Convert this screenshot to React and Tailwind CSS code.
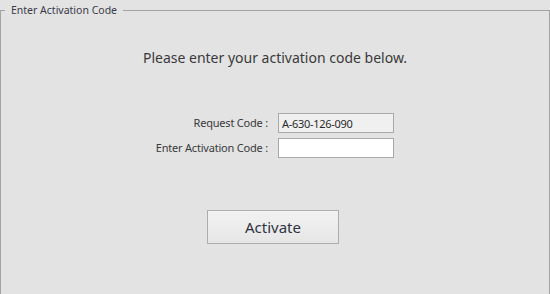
import React from "react";

// Activation code panel
const FieldRow = ({ label, children }) => (
  <div className="flex items-center">
    <label className="w-[277px] pr-[10px] text-right text-[11px] tracking-[-0.2px] leading-[20px] text-[#3a3a3a]">
      {label}
    </label>
    {children}
  </div>
);

const App = () => {
  return (
    <div
      className="w-[550px] h-[294px] overflow-hidden bg-[#e3e3e3]"
      style={{ fontFamily: '"Noto Sans", "Open Sans", sans-serif' }}
    >
      <fieldset className="h-[320px] border border-[#a3a3a3]">
        <legend className="ml-[4px] px-[6px] text-[10.5px] leading-[20px] text-[#3a3a4a]">
          Enter Activation Code
        </legend>

        <div className="flex flex-col items-start">
          <h1 className="mt-[28px] w-full text-center text-[14px] leading-[20px] text-[#3a3a3a]">
            Please enter your activation code below.
          </h1>

          <div className="mt-[45px] flex flex-col gap-[5px]">
            <FieldRow label="Request Code :">
              <input
                readOnly
                value="A-630-126-090"
                className="w-[116px] h-[20px] border border-[#a9a9a9] bg-[#f0f0f0] px-[3px] text-[11px] tracking-[-0.3px] text-[#2a2a2a] outline-none"
              />
            </FieldRow>
            <FieldRow label="Enter Activation Code :">
              <input className="w-[116px] h-[20px] border border-[#a9a9a9] bg-white px-[3px] text-[11px] outline-none" />
            </FieldRow>
          </div>

          <button className="mt-[52px] ml-[206px] w-[132px] h-[34px] border border-[#adadad] bg-gradient-to-b from-[#f2f2f2] to-[#e6e6e6] text-[15px] text-[#2e3340]">
            Activate
          </button>
        </div>
      </fieldset>
    </div>
  );
};

export default App;
